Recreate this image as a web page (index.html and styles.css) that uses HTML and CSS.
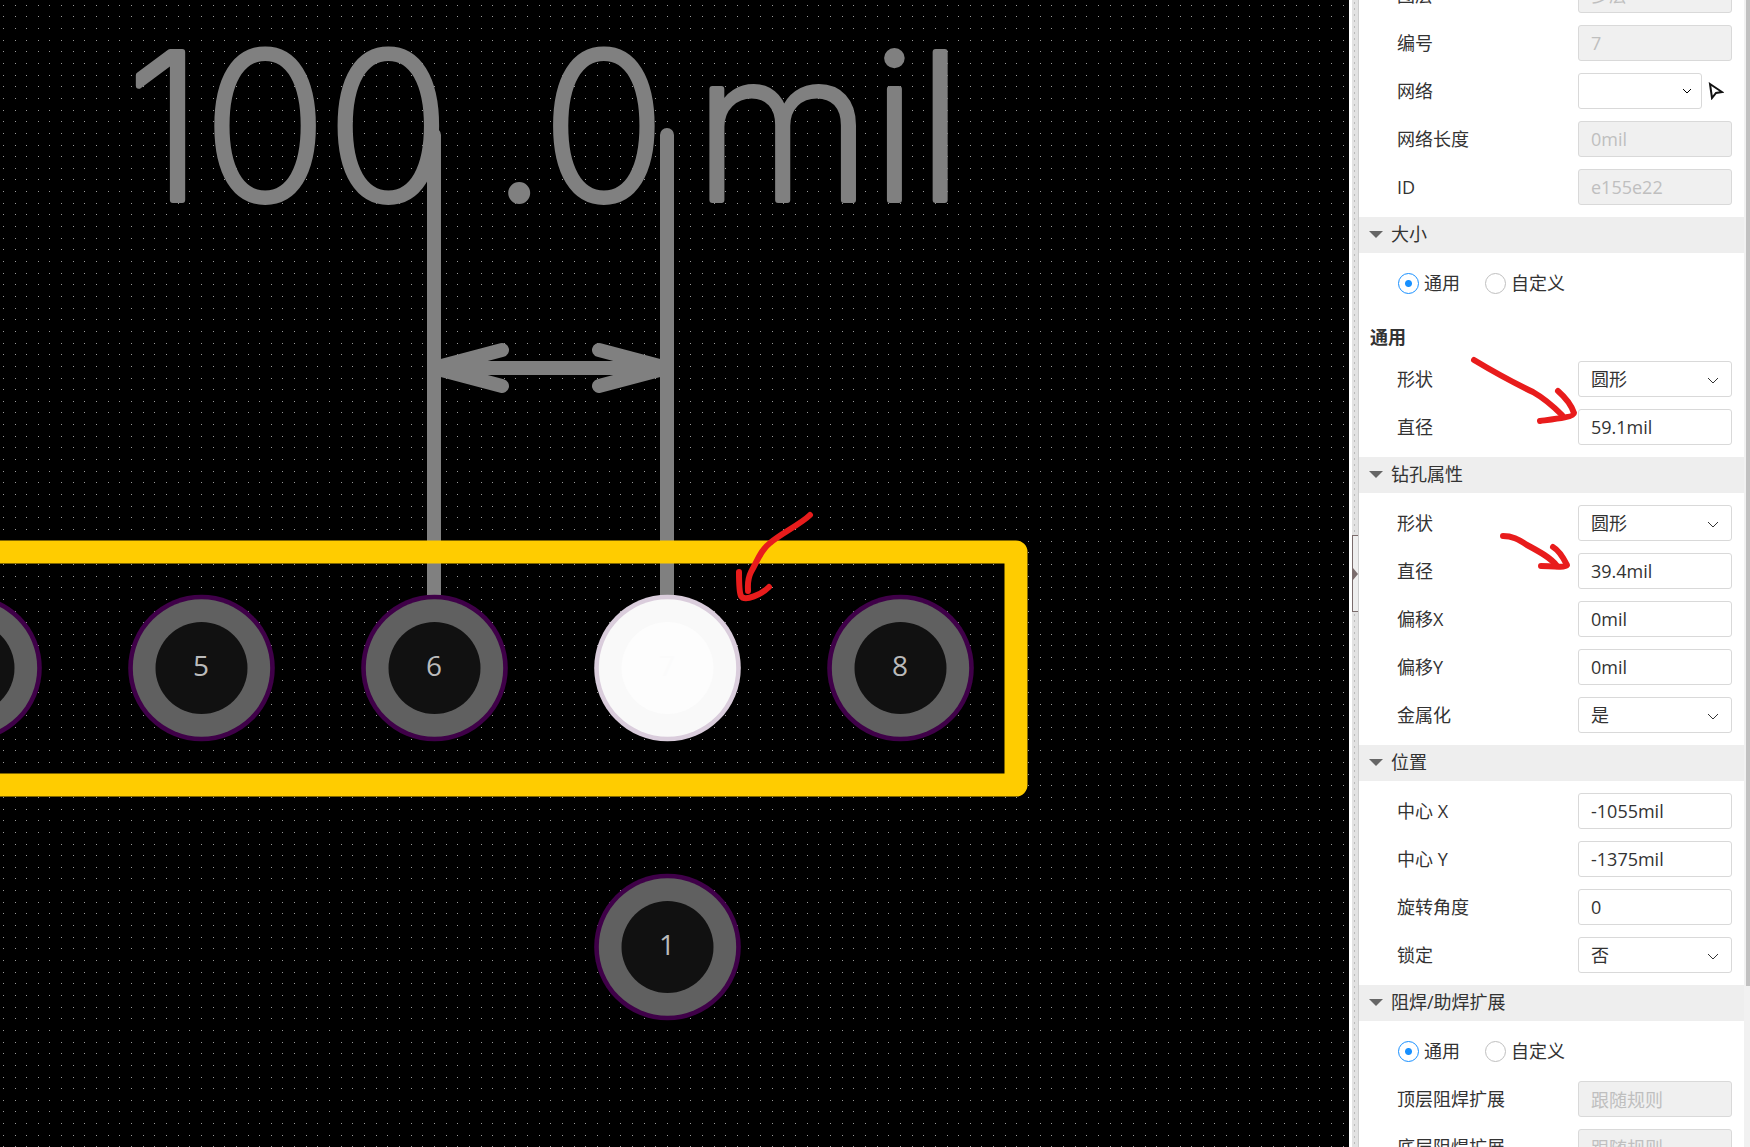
FILE: index.html
```html
<!DOCTYPE html>
<html lang="zh-CN">
<head>
<meta charset="utf-8">
<title>PCB</title>
<link rel="stylesheet" href="styles.css">
</head>
<body>
<div class="app">
  <main class="board">
    <svg class="board-canvas" xmlns="http://www.w3.org/2000/svg">
      <defs>
        <path id="dots" d="M0 0h1v1h-1zM11 0h1v1h-1zM23 0h1v1h-1zM35 0h1v1h-1zM46 0h1v1h-1zM58 0h1v1h-1zM70 0h1v1h-1zM81 0h1v1h-1zM93 0h1v1h-1zM105 0h1v1h-1zM116 0h1v1h-1zM128 0h1v1h-1zM140 0h1v1h-1zM151 0h1v1h-1zM163 0h1v1h-1zM174 0h1v1h-1zM186 0h1v1h-1zM198 0h1v1h-1zM209 0h1v1h-1zM221 0h1v1h-1z"/>
        <pattern id="grid" x="108" y="28" width="233" height="233" patternUnits="userSpaceOnUse">
          <g class="grid-dots">
            <use href="#dots" y="0"/><use href="#dots" y="12"/><use href="#dots" y="23"/><use href="#dots" y="35"/>
            <use href="#dots" y="47"/><use href="#dots" y="58"/><use href="#dots" y="70"/><use href="#dots" y="82"/>
            <use href="#dots" y="93"/><use href="#dots" y="105"/><use href="#dots" y="117"/><use href="#dots" y="128"/>
            <use href="#dots" y="140"/><use href="#dots" y="151"/><use href="#dots" y="163"/><use href="#dots" y="175"/>
            <use href="#dots" y="186"/><use href="#dots" y="198"/><use href="#dots" y="210"/><use href="#dots" y="221"/>
          </g>
        </pattern>
        <g id="pad">
          <circle class="pad-mask" cx="0.5" r="73.3"/>
          <circle class="pad-ring" cx="0.5" r="68.7"/>
          <circle class="pad-hole" cx="0.5" r="46"/>
        </g>
      </defs>
      <rect width="100%" height="100%" fill="url(#grid)"/>

      <text class="dimension-text" y="200"><tspan x="126">100</tspan><tspan x="491">.0</tspan><tspan x="694">mil</tspan></text>
      <g class="dimension">
        <path d="M434 135V640M667 135V640M434 368H667"/>
        <path d="M502 350L434 368L502 386M599 350L667 368L599 386"/>
      </g>
      <path class="silk" d="M-20 552H1016V785H-20"/>

      <use href="#pad" x="-32" y="668"/>
      <use href="#pad" x="201" y="668"/>
      <use href="#pad" x="434" y="668"/>
      <use class="selected" href="#pad" x="667" y="668"/>
      <use href="#pad" x="900" y="668"/>
      <use href="#pad" x="667" y="947"/>
      <g class="pad-number">
        <text x="201" y="676">5</text>
        <text x="434" y="676">6</text>
        <text class="number-selected" x="667" y="676">7</text>
        <text x="900" y="676">8</text>
        <text x="667" y="955">1</text>
      </g>

      <g class="note">
        <path d="M810 515C801 524 780 534 770 543C760 551 758 560 751 572C747 580 748 584 748 591"/>
        <path d="M739 572C739 582 739 592 741 596C745 602 762 594 769 587"/>
      </g>
    </svg>
  </main>

  <div class="splitter"><button class="splitter-handle" type="button" aria-label="折叠"></button></div>

  <aside class="panel">
    <form class="props">
      <section class="group">
        <div class="row"><label for="layer">图层</label>
          <span class="select"><select id="layer" disabled><option>多层</option></select><svg class="chevron" viewBox="0 0 12 8"><path d="M1 1L6 6L11 1"/></svg></span></div>
        <div class="row"><label for="num">编号</label><input id="num" value="7" disabled></div>
        <div class="row"><label for="net">网络</label>
          <span class="net">
            <span class="select select-net"><select id="net"><option></option></select><svg class="chevron chevron-net" viewBox="0 0 12 8"><path d="M2 2L6 6L10 2"/></svg></span>
            <button class="pick" type="button" aria-label="选择"><svg width="16" height="18" viewBox="0 0 16 18"><path d="M2 2L14 10L8 11L4 16Z"/></svg></button>
          </span></div>
        <div class="row"><label for="len">网络长度</label><input id="len" value="0mil" disabled></div>
        <div class="row"><label for="id">ID</label><input id="id" value="e155e22" disabled></div>
      </section>

      <section class="group">
        <h2>大小</h2>
        <div class="radios">
          <label><input type="radio" name="size" checked>通用</label>
          <label><input type="radio" name="size">自定义</label>
        </div>
        <h3>通用</h3>
        <div class="row"><label for="shape">形状</label>
          <span class="select"><select id="shape"><option>圆形</option></select><svg class="chevron" viewBox="0 0 12 8"><path d="M1 1L6 6L11 1"/></svg></span></div>
        <div class="row"><label for="dia">直径</label><input id="dia" value="59.1mil"></div>
      </section>

      <section class="group">
        <h2>钻孔属性</h2>
        <div class="row"><label for="hshape">形状</label>
          <span class="select"><select id="hshape"><option>圆形</option></select><svg class="chevron" viewBox="0 0 12 8"><path d="M1 1L6 6L11 1"/></svg></span></div>
        <div class="row"><label for="hdia">直径</label><input id="hdia" value="39.4mil"></div>
        <div class="row"><label for="offx">偏移X</label><input id="offx" value="0mil"></div>
        <div class="row"><label for="offy">偏移Y</label><input id="offy" value="0mil"></div>
        <div class="row"><label for="plated">金属化</label>
          <span class="select"><select id="plated"><option>是</option></select><svg class="chevron" viewBox="0 0 12 8"><path d="M1 1L6 6L11 1"/></svg></span></div>
      </section>

      <section class="group">
        <h2>位置</h2>
        <div class="row"><label for="cx">中心 X</label><input id="cx" value="-1055mil"></div>
        <div class="row"><label for="cy">中心 Y</label><input id="cy" value="-1375mil"></div>
        <div class="row"><label for="rot">旋转角度</label><input id="rot" value="0"></div>
        <div class="row"><label for="lock">锁定</label>
          <span class="select"><select id="lock"><option>否</option></select><svg class="chevron" viewBox="0 0 12 8"><path d="M1 1L6 6L11 1"/></svg></span></div>
      </section>

      <section class="group">
        <h2>阻焊/助焊扩展</h2>
        <div class="radios">
          <label><input type="radio" name="mask" checked>通用</label>
          <label><input type="radio" name="mask">自定义</label>
        </div>
        <div class="row"><label for="top">顶层阻焊扩展</label><input id="top" value="跟随规则" disabled></div>
        <div class="row"><label for="bottom">底层阻焊扩展</label><input id="bottom" value="跟随规则" disabled></div>
      </section>
    </form>
    <div class="scrollbar"><div class="thumb"></div></div>
    <svg class="panel-notes note" xmlns="http://www.w3.org/2000/svg">
      <path d="M115 360C130 369 151 381 174 392C188 400 196 408 203 415"/>
      <path d="M199 391C207 398 213 407 215 413C215 417 196 419 181 421"/>
      <path d="M144 536C153 536 159 539 168 545C181 552 192 558 198 566"/>
      <path d="M194 547C201 551 205 559 208 565C206 568 190 566 182 566"/>
    </svg>
  </aside>
</div>
</body>
</html>
```

FILE: styles.css
```css
* {
  box-sizing: border-box;
}

body {
  margin: 0;
  background: #fff;
  color: #333;
  font: 18px/24px "Open Sans", "Noto Sans CJK SC", sans-serif;
}

.app {
  display: flex;
  height: 100vh;
  overflow: hidden;
}

/* Board */
.board {
  flex: 1;
  min-width: 0;
  background: #000;
}

.board-canvas {
  display: block;
  width: 100%;
  height: 100%;
}

.grid-dots {
  fill: #999;
  shape-rendering: crispEdges;
}

.dimension-text {
  font: 200 204px Inter, sans-serif;
  fill: #808080;
  stroke: #808080;
  stroke-width: 6px;
  stroke-linejoin: round;
}

.dimension {
  fill: none;
  stroke: #808080;
  stroke-width: 14px;
  stroke-linecap: round;
  stroke-linejoin: round;
}

.silk {
  fill: none;
  stroke: #fc0;
  stroke-width: 23px;
  stroke-linejoin: round;
}

.pad-mask {
  fill: var(--mask, #3f0048);
}

.pad-ring {
  fill: var(--ring, #606060);
}

.pad-hole {
  fill: var(--hole, #111);
}

.selected {
  --mask: #dacddc;
  --ring: #f9f9f9;
  --hole: #fdfdfd;
}

.pad-number {
  font-size: 28px;
  fill: #bbb;
  text-anchor: middle;
}

.number-selected {
  fill: #fbfbfb;
}

.note {
  fill: none;
  stroke: #e81c1c;
  stroke-width: 6px;
  stroke-linecap: round;
  stroke-linejoin: round;
}

/* Splitter */
.splitter {
  display: flex;
  align-items: center;
  width: 10px;
  border-left: 3px solid #fff;
  border-right: 1px solid #ccc;
  background: radial-gradient(circle, #bbb 1px, transparent 1px) 0 0 / 5px 6px #e2e2e2;
}

.splitter-handle {
  display: flex;
  align-items: center;
  width: 6px;
  height: 77px;
  padding: 0;
  border: 1px solid #7a6c6c;
  border-right: 0;
  background: #eee;
}

.splitter-handle::before {
  content: "";
  border: 6px solid transparent;
  border-left: 5px solid #7a6c6c;
  border-right: 0;
}

/* Panel */
.panel {
  position: relative;
  display: flex;
  width: 391px;
  overflow: hidden;
}

.props {
  flex: 1;
  margin-top: -23px;
}

.row {
  display: flex;
  align-items: center;
  justify-content: space-between;
  height: 36px;
  margin: 0 12px 12px 38px;
}

h2 {
  display: flex;
  align-items: center;
  gap: 8px;
  height: 36px;
  margin: 0 0 12px;
  padding: 0 0 2px 10px;
  background: #eee;
  font-size: 18px;
  font-weight: 400;
}

h2::before {
  content: "";
  border: 7px solid transparent;
  border-top-color: #666;
  border-bottom: 0;
}

h3 {
  height: 36px;
  margin: 0 0 12px;
  padding: 12px 0 0 11px;
  font-size: 18px;
  font-weight: 700;
}

.row > input,
.select {
  width: 154px;
  height: 36px;
}

.row > input,
select {
  border: 1px solid #d9d9d9;
  border-radius: 3px;
  padding: 0 12px;
  background: #fff;
  color: #333;
  font: inherit;
}

.row > input:disabled,
select:disabled {
  background: #f0f0f0;
  color: #bfbfbf;
  opacity: 1;
}

.select {
  position: relative;
}

select {
  width: 100%;
  height: 100%;
  appearance: none;
}

.chevron {
  position: absolute;
  top: 16px;
  right: 13px;
  width: 12px;
  height: 8px;
  fill: none;
  stroke: #333;
  stroke-width: 1px;
  pointer-events: none;
}

select:disabled + .chevron {
  stroke: #bfbfbf;
}

.net {
  display: flex;
  align-items: center;
  gap: 6px;
  width: 154px;
}

.select-net {
  width: 124px;
}

.chevron-net {
  top: 14px;
  right: 9px;
  stroke: #000;
}

.pick {
  display: flex;
  padding: 0;
  border: 0;
  background: none;
}

.pick path {
  fill: none;
  stroke: #111;
  stroke-width: 2px;
}

.radios {
  display: flex;
  gap: 25px;
  height: 36px;
  margin: 0 0 12px 39px;
}

.radios label {
  display: flex;
  align-items: center;
  gap: 5px;
}

.radios input {
  width: 21px;
  height: 21px;
  margin: 0;
  border: 1px solid #bfbfbf;
  border-radius: 50%;
  appearance: none;
}

.radios input:checked {
  border-color: #1890ff;
  background: radial-gradient(circle, #1890ff 3px, transparent 4px);
}

.scrollbar {
  width: 6px;
  padding-left: 2px;
  background: #f1f1f1;
}

.thumb {
  height: 86%;
  background: #c1c1c1;
}

.panel-notes {
  position: absolute;
  inset: 0;
  width: 100%;
  height: 100%;
  pointer-events: none;
}
```
